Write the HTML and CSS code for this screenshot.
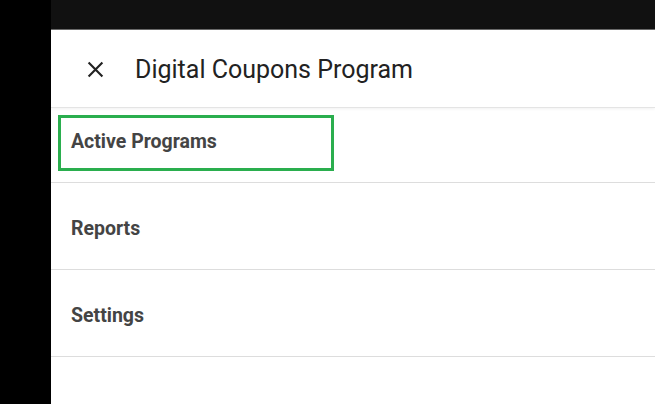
FILE: index.html
```html
<!DOCTYPE html>
<html>
<head>
<meta charset="utf-8">
<link rel="stylesheet" href="styles.css">
</head>
<body>
<div class="screen">
  <div class="side"></div>
  <div class="main">
    <div class="topbar"></div>
    <div class="panel">
      <div class="header">
        <svg class="close" width="17" height="17" viewBox="0 0 16 16"><path d="M1.5 1.5 L14.5 14.5 M14.5 1.5 L1.5 14.5" stroke="#222" stroke-width="2" fill="none"/></svg>
        <h1 class="title">Digital Coupons Program</h1>
      </div>
      <ul class="menu">
        <li class="item first">Active Programs</li>
        <li class="item">Reports</li>
        <li class="item">Settings</li>
      </ul>
      <div class="highlight"></div>
    </div>
  </div>
</div>
</body>
</html>
```
FILE: styles.css
```css
* { box-sizing: border-box; }
html, body { margin: 0; padding: 0; }
body { width: 655px; height: 404px; overflow: hidden; font-family: Roboto, "Liberation Sans", sans-serif; background: #fff; }
.screen { display: flex; width: 655px; height: 404px; }
.side { width: 51px; background: #000; flex: none; }
.main { flex: 1; display: flex; flex-direction: column; }
.topbar { height: 30px; background: #111; border-bottom: 1px solid #6a6a6a; flex: none; }
.panel { position: relative; flex: 1; background: #fff; }
.header { height: 78px; display: flex; align-items: center; padding-left: 36px; padding-top: 2px; border-bottom: 1px solid #e4e4e4; box-shadow: 0 1px 3px rgba(0,0,0,0.06); }
.close { flex: none; }
.title { margin: 0 0 0 31px; font-size: 25px; font-weight: 400; color: #222; letter-spacing: 0; }
.menu { list-style: none; margin: 0; padding: 0; }
.item { height: 87px; display: flex; align-items: center; padding-left: 20px; padding-top: 4px; font-size: 19.5px; font-weight: 700; color: #444; border-bottom: 1px solid #ddd; }
.item.first { height: 75px; padding-top: 0; padding-bottom: 7px; }
.highlight { position: absolute; left: 7px; top: 85px; width: 276px; height: 56px; border: 3px solid #2aae4e; }
```
